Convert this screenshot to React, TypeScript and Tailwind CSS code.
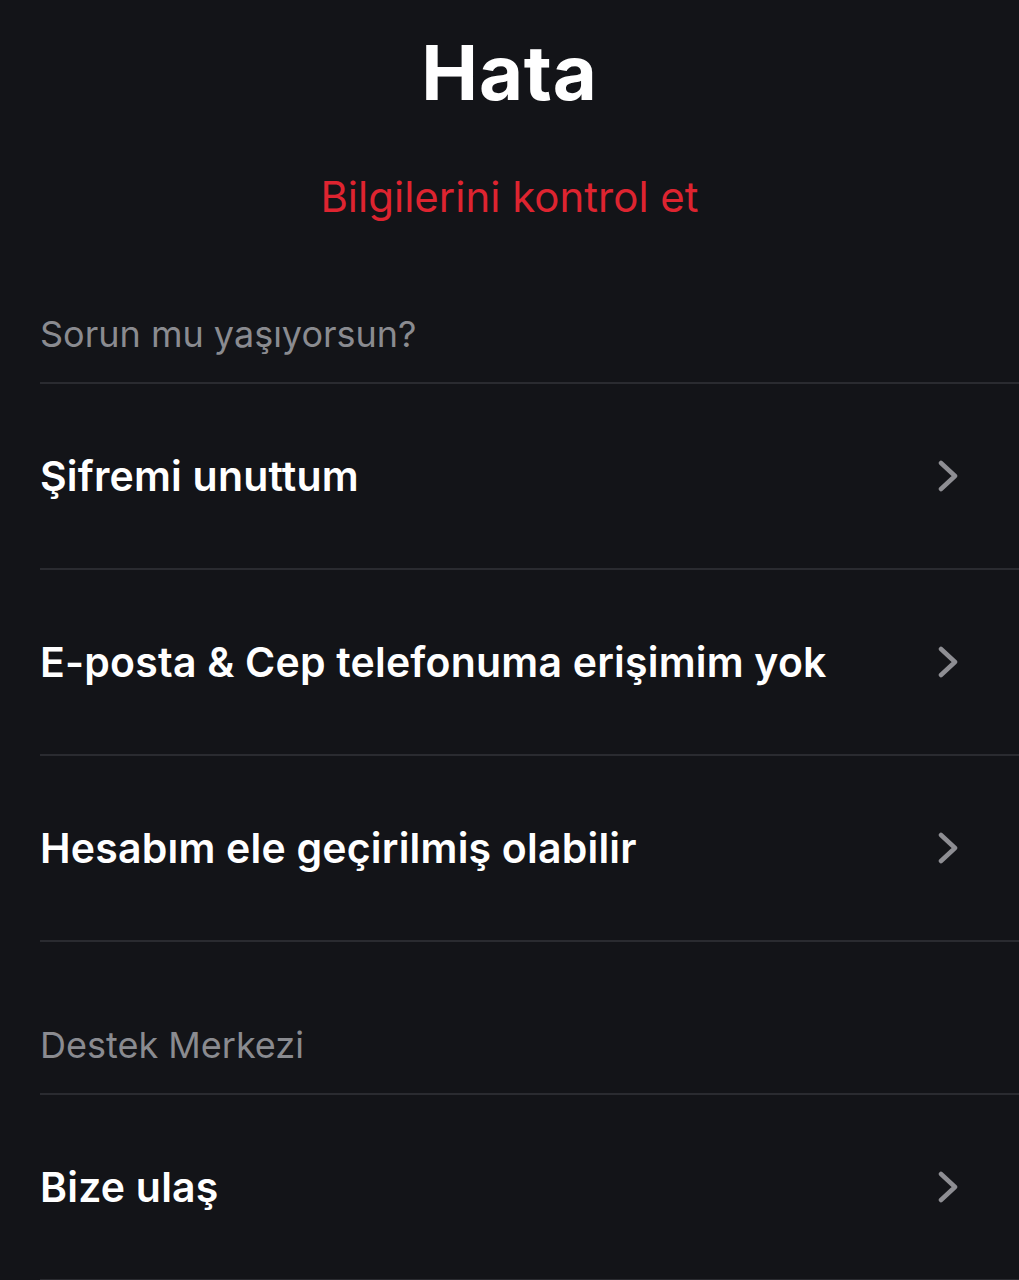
const troubleItems = [
  'Şifremi unuttum',
  'E-posta & Cep telefonuma erişimim yok',
  'Hesabım ele geçirilmiş olabilir',
];

function Chevron() {
  return (
    <svg width="24" height="32" viewBox="0 0 24 32" fill="none" className="text-[#8e8e93]">
      <polyline
        points="4,3 18,16 4,29"
        stroke="currentColor"
        strokeWidth="4.5"
        strokeLinecap="round"
        strokeLinejoin="round"
      />
    </svg>
  );
}

function Row({ label }: { label: string }) {
  return (
    <div className="flex h-[186px] items-center justify-between border-b-2 border-[#2a2b30] pr-[58px]">
      <span className="text-[41px] font-semibold leading-[50px] tracking-[0.005em] text-white">{label}</span>
      <Chevron />
    </div>
  );
}

function SectionLabel({ children }: { children: string }) {
  return (
    <div className="border-b-2 border-[#2a2b30] pb-[26px] text-[36px] leading-[44px] text-[#8a8b90]">
      {children}
    </div>
  );
}

export default function App() {
  return (
    <div
      className="min-h-screen bg-[#131418]"
      style={{ fontFamily: 'Inter, "Noto Sans", sans-serif' }}
    >
      <div className="flex flex-col items-center pt-[20px]">
        <h1 className="text-[76px] font-bold leading-[104px] tracking-[0.01em] text-white">Hata</h1>
        <p className="mt-[48px] text-[42px] leading-[50px] text-[#de2430]">Bilgilerini kontrol et</p>
      </div>

      <div className="pl-[40px] pt-[90px]">
        <SectionLabel>Sorun mu yaşıyorsun?</SectionLabel>
        {troubleItems.map((item) => (
          <Row key={item} label={item} />
        ))}
        <div className="pt-[81px]">
          <SectionLabel>Destek Merkezi</SectionLabel>
        </div>
        <Row label="Bize ulaş" />
      </div>
    </div>
  );
}
